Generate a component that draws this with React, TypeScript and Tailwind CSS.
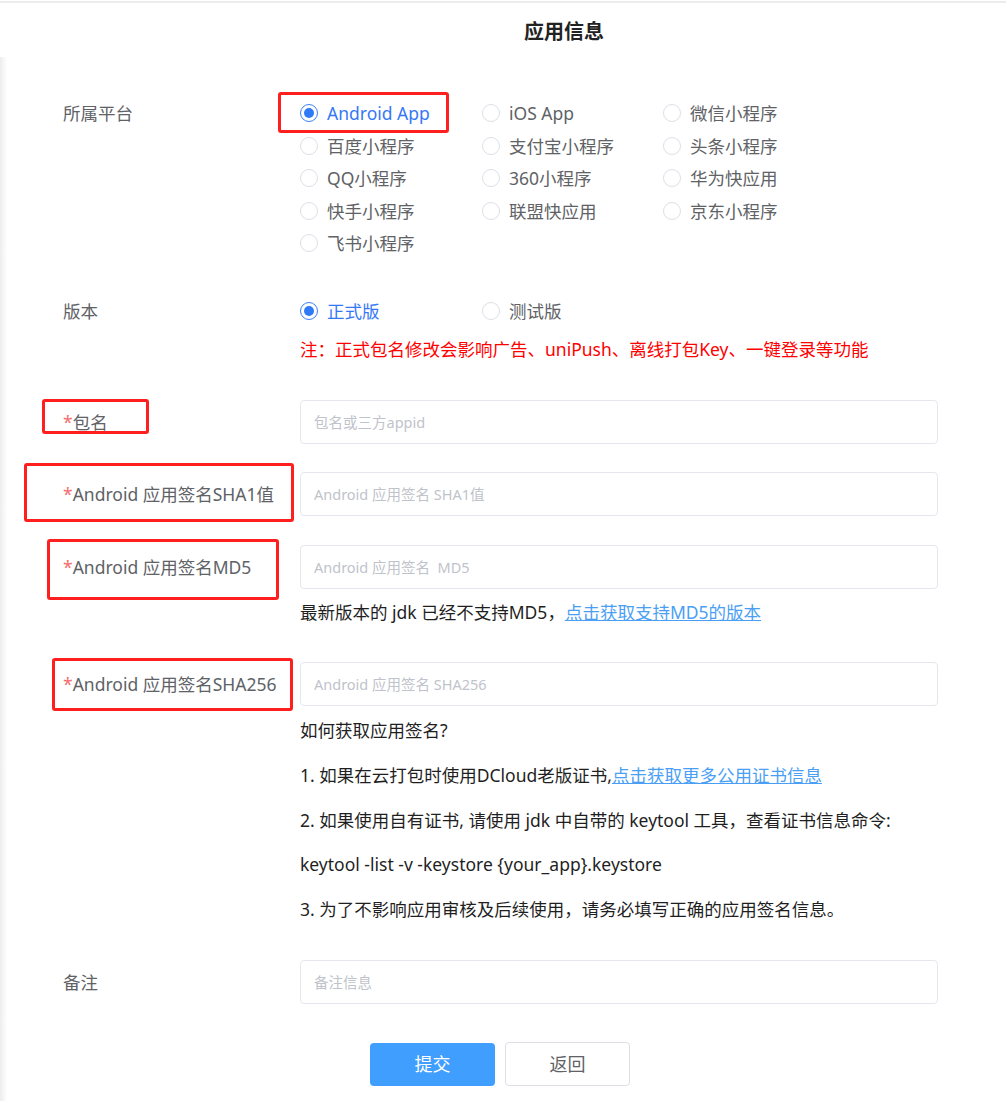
import type { ReactNode } from 'react';

const platforms = [
    'Android App', 'iOS App', '微信小程序',
    '百度小程序', '支付宝小程序', '头条小程序',
    'QQ小程序', '360小程序', '华为快应用',
    '快手小程序', '联盟快应用', '京东小程序',
    '飞书小程序',
];

function Radio({ label, checked }: { label: string; checked?: boolean }) {
    return (
        <label className="flex items-center h-[32.5px] cursor-pointer">
            <span
                className={`w-[18px] h-[18px] rounded-full border flex items-center justify-center bg-white ${
                    checked ? 'border-[#3b82f6]' : 'border-[#dcdfe6]'
                }`}
            >
                {checked && <span className="w-[10px] h-[10px] rounded-full bg-[#2f7bf6]"></span>}
            </span>
            <span className={`ml-[9px] ${checked ? 'text-[#3578f6]' : 'text-[#606266]'}`}>{label}</span>
        </label>
    );
}

function Label({ children, required, lead = '' }: { children: ReactNode; required?: boolean; lead?: string }) {
    return (
        <div className={`w-[237px] shrink-0 text-[#606266] ${lead}`}>
            {required && <span className="text-[#f56c6c]">*</span>}
            {children}
        </div>
    );
}

function Input({ placeholder }: { placeholder: string }) {
    return (
        <input
            placeholder={placeholder}
            className="w-full h-[44px] border border-[#e4e7ed] rounded-[4px] pl-[13px] text-[14.5px] outline-none placeholder:text-[#bfc3cb] bg-white"
        />
    );
}

// red annotation boxes drawn over the screenshot
function Mark({ className }: { className: string }) {
    return <div className={`absolute border-[3px] border-[#ff1f1f] rounded-[3px] pointer-events-none ${className}`}></div>;
}

export default function App() {
    return (
        <div
            className="relative w-[1006px] h-[1101px] bg-white overflow-hidden text-[17.5px]"
            style={{ fontFamily: '"Noto Sans", "Noto Sans CJK SC", sans-serif' }}
        >
            <div className="mt-[1px] h-[2px] bg-[#ececec]"></div>
            <div className="h-[54px] pl-[122px] pt-[4px] flex items-center justify-center">
                <h1 className="text-[20px] font-bold text-[#222]">应用信息</h1>
            </div>

            <div className="flex h-[1044px]">
                <div className="w-[7px] shrink-0 bg-gradient-to-r from-[#ededed] to-white"></div>
                <div className="flex-1 pl-[56px] pr-[68px] pt-[40px]">
                    {/* 所属平台 */}
                    <div className="flex">
                        <Label lead="leading-[32.5px]">所属平台</Label>
                        <div className="grid grid-cols-[182px_181px_auto]">
                            {platforms.map((p, i) => (
                                <Radio key={p} label={p} checked={i === 0} />
                            ))}
                        </div>
                    </div>

                    {/* 版本 */}
                    <div className="flex mt-[35.25px]">
                        <Label lead="leading-[32.5px]">版本</Label>
                        <div>
                            <div className="grid grid-cols-[182px_181px]">
                                <Radio label="正式版" checked />
                                <Radio label="测试版" />
                            </div>
                            <div className="mt-[6px] leading-[32px] text-[#ff0000]">
                                注：正式包名修改会影响广告、uniPush、离线打包Key、一键登录等功能
                            </div>
                        </div>
                    </div>

                    <div className="flex items-center mt-[34.75px]">
                        <Label required>包名</Label>
                        <Input placeholder="包名或三方appid" />
                    </div>

                    <div className="flex items-center mt-[28px]">
                        <Label required>Android 应用签名SHA1值</Label>
                        <Input placeholder="Android 应用签名 SHA1值" />
                    </div>

                    <div className="flex mt-[29px]">
                        <Label required lead="leading-[44px]">Android 应用签名MD5</Label>
                        <div className="flex-1">
                            <Input placeholder="Android 应用签名  MD5" />
                            <div className="mt-[7px] leading-[32px] text-[#1f1f1f]">
                                最新版本的 jdk 已经不支持MD5，
                                <a href="#" className="text-[#4a9ff5] underline">点击获取支持MD5的版本</a>
                            </div>
                        </div>
                    </div>

                    <div className="flex mt-[34px]">
                        <Label required lead="leading-[44px]">Android 应用签名SHA256</Label>
                        <div className="flex-1">
                            <Input placeholder="Android 应用签名 SHA256" />
                            <div className="mt-[2px] leading-[44.75px] text-[#1f1f1f]">
                                <div>如何获取应用签名?</div>
                                <div>
                                    1. 如果在云打包时使用DCloud老版证书,
                                    <a href="#" className="text-[#4a9ff5] underline">点击获取更多公用证书信息</a>
                                </div>
                                <div>2. 如果使用自有证书, 请使用 jdk 中自带的 keytool 工具，查看证书信息命令:</div>
                                <div>keytool -list -v -keystore {'{your_app}'}.keystore</div>
                                <div>3. 为了不影响应用审核及后续使用，请务必填写正确的应用签名信息。</div>
                            </div>
                        </div>
                    </div>

                    <div className="flex items-center mt-[28.25px]">
                        <Label>备注</Label>
                        <Input placeholder="备注信息" />
                    </div>

                    <div className="flex items-center gap-[10px] mt-[38px] pl-[307px]">
                        <button className="w-[125px] h-[43px] rounded-[4px] bg-[#409eff] text-white text-[18px]">提交</button>
                        <button className="w-[125px] h-[44px] rounded-[4px] border border-[#dcdfe6] bg-white text-[#606266] text-[18px]">返回</button>
                    </div>
                </div>
            </div>

            <Mark className="left-[278px] top-[92px] w-[171px] h-[41px]" />
            <Mark className="left-[42px] top-[399px] w-[107px] h-[35px]" />
            <Mark className="left-[24px] top-[463px] w-[270px] h-[59px]" />
            <Mark className="left-[47px] top-[539px] w-[232px] h-[61px]" />
            <Mark className="left-[52px] top-[658px] w-[241px] h-[53px]" />
        </div>
    );
}
